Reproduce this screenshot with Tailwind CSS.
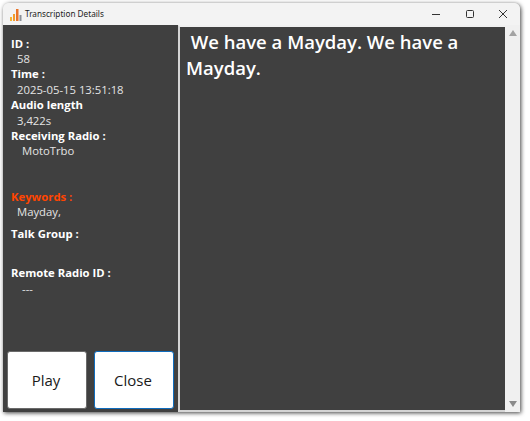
<!DOCTYPE html>
<html lang="en">
<head>
  <meta charset="UTF-8" />
  <title>Transcription Details</title>
  <script src="https://cdn.jsdelivr.net/npm/@tailwindcss/browser@4"></script>
</head>
<body class="bg-white w-[530px] h-[421px] overflow-hidden font-['Open_Sans','Noto_Sans',sans-serif]">
  <div class="ml-[3px] mt-[3px] w-[517px] h-[409px] flex flex-col bg-[#f0f0f0] rounded-t-[6px] shadow-[1px_1px_4px_rgba(0,0,0,0.75)]">
    <!-- Title bar -->
    <div class="h-[22px] shrink-0 flex items-center bg-[#f3f3f3] rounded-t-[6px]">
      <svg class="ml-[7px] mt-[1px]" width="13" height="14" viewBox="0 0 13 14">
        <rect x="0" y="9" width="2" height="4" fill="#f5b335"/>
        <rect x="3" y="6" width="2" height="7" fill="#f39c2b"/>
        <rect x="6" y="1" width="2.5" height="12" fill="#e8742a"/>
        <rect x="9.5" y="7" width="2" height="6" fill="#8a8f98"/>
      </svg>
      <span class="ml-[2px] mt-[1px] text-[8.2px] text-[#222] font-['Noto_Sans',sans-serif]">Transcription Details</span>
      <div class="ml-auto flex items-center text-[#333]">
        <div class="w-[34px] flex justify-center">
          <svg width="10" height="10" viewBox="0 0 10 10"><path d="M1 5.5h8" stroke="#333" stroke-width="1"/></svg>
        </div>
        <div class="w-[33px] flex justify-center">
          <svg width="10" height="10" viewBox="0 0 10 10"><rect x="1.5" y="1.5" width="7" height="7" rx="1" fill="none" stroke="#333" stroke-width="1"/></svg>
        </div>
        <div class="w-[34px] flex justify-center">
          <svg width="10" height="10" viewBox="0 0 10 10"><path d="M1 1l8 8M9 1l-8 8" stroke="#333" stroke-width="1"/></svg>
        </div>
      </div>
    </div>

    <div class="flex-1 flex min-h-0 bg-[#404040]">
      <!-- Left panel -->
      <div class="w-[175px] shrink-0 flex flex-col text-[11.3px] leading-[15.4px] pt-[10.5px]">
        <div class="pl-[8px] font-bold text-white">ID :</div>
        <div class="pl-[14px] text-[#e4e4e4]">58</div>
        <div class="pl-[8px] font-bold text-white">Time :</div>
        <div class="pl-[14px] text-[#e4e4e4]">2025-05-15 13:51:18</div>
        <div class="pl-[8px] font-bold text-white">Audio length</div>
        <div class="pl-[14px] text-[#e4e4e4]">3,422s</div>
        <div class="pl-[8px] font-bold text-white">Receiving Radio :</div>
        <div class="pl-[19px] text-[#e4e4e4]">MotoTrbo</div>
        <div class="pl-[8px] mt-[30px] font-bold text-[#ff4500]">Keywords :</div>
        <div class="pl-[14px] text-[#e4e4e4]">Mayday,</div>
        <div class="pl-[8px] mt-[6.5px] font-bold text-white">Talk Group :</div>
        <div class="pl-[8px] mt-[24px] font-bold text-white">Remote Radio ID :</div>
        <div class="pl-[19px] text-[#e4e4e4]">---</div>
        <div class="mt-auto flex gap-[7px] pl-[4px] pb-[3.5px]">
          <button class="w-[80px] h-[58px] pt-[2px] pr-[2px] bg-white rounded-[3px] border border-[#6a6a6a] text-[15px] text-[#1a1a1a]">Play</button>
          <button class="w-[80px] h-[58px] pt-[2px] pr-[2px] bg-white rounded-[3px] border border-[#0f6cbd] text-[15px] text-[#1a1a1a]">Close</button>
        </div>
      </div>

      <!-- Transcription text -->
      <div class="w-[327px] shrink-0 border-l-2 border-b-2 border-l-[#d4d4d4] border-b-[#d4d4d4] border-t-2 border-t-[#f0f0f0] pl-[6px] pt-[2px] text-[18.5px] leading-[26px] font-semibold text-white">
        &nbsp;We have a Mayday. We have a Mayday.
      </div>

      <!-- Scrollbar -->
      <div class="flex-1 bg-[#f0f0f0] flex flex-col justify-between items-center py-[5px]">
        <div class="w-0 h-0 border-x-[4px] border-x-transparent border-b-[6px] border-b-[#a3a3a3]"></div>
        <div class="w-0 h-0 border-x-[4px] border-x-transparent border-t-[6px] border-t-[#8a8a8a]"></div>
      </div>
    </div>
  </div>
</body>
</html>
